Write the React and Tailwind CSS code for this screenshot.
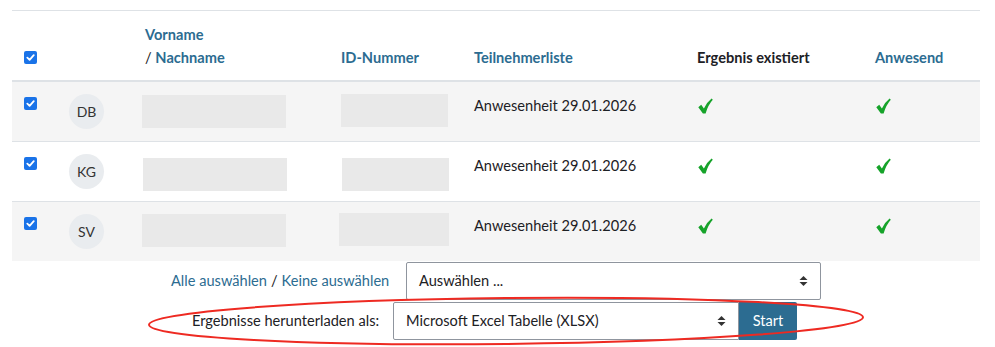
import React from 'react';

const link = 'text-[#2c6c91]';

function Box() {
    return (
        <span className="inline-flex w-[13px] h-[13px] rounded-[2px] bg-[#1a73e8] items-center justify-center">
            <svg width="9" height="9" viewBox="0 0 10 10">
                <path d="M1.5 5.2 L4 7.6 L8.6 2.4" fill="none" stroke="white" strokeWidth="2" strokeLinecap="round" strokeLinejoin="round" />
            </svg>
        </span>
    );
}

function Tick() {
    return (
        <svg width="15" height="16" viewBox="0 0 15 16" className="inline-block">
            <path d="M0.3 9.2 L3.2 6.8 L5.9 10.4 Q8.6 4.6 13.6 0.6 L14.8 1.8 Q10.2 6.8 7.6 15.4 L4.9 15.4 Z" fill="#16a32a" />
        </svg>
    );
}

function Arrows() {
    return (
        <svg width="9" height="12" viewBox="0 0 9 12">
            <path d="M0.5 5 L4.5 1 L8.5 5 Z" fill="#333" />
            <path d="M0.5 7 L4.5 11 L8.5 7 Z" fill="#333" />
        </svg>
    );
}

const rows = [
    { initials: 'DB', bg: 'bg-[#f5f5f5]', name: '-ml-[3px] mt-[1px]', id: 'ml-0 mt-0 w-[107px]' },
    { initials: 'KG', bg: 'bg-white', name: '-ml-[2px] mt-[4px]', id: 'ml-[1px] mt-[4px] w-[107px]' },
    { initials: 'SV', bg: 'bg-[#f5f5f5]', name: '-ml-[3px] mt-0', id: '-ml-[2px] -mt-[1px] w-[110px]' },
];

export default function App() {
    return (
        <div className="relative w-[995px] h-[347px] bg-white text-[14.6px] text-[#1d2125]" style={{ fontFamily: '"Lato", "Noto Sans", sans-serif' }}>
            <div className="pt-[10px] pl-[12px]">
                <table className="w-[968px] border-collapse table-fixed">
                    <colgroup>
                        <col className="w-[45px]" />
                        <col className="w-[76px]" />
                        <col className="w-[196px]" />
                        <col className="w-[133px]" />
                        <col className="w-[223px]" />
                        <col className="w-[178px]" />
                        <col className="w-[117px]" />
                    </colgroup>
                    <thead>
                        <tr className="border-t border-[#dee2e6] border-b-2 border-b-[#dee2e6] font-bold leading-[23px] text-left align-bottom">
                            <th className="px-3 pt-[12px] pb-[11px]"><span className="inline-flex mb-[5px]"><Box /></span></th>
                            <th className="px-3 pt-[12px] pb-[11px]"></th>
                            <th className="px-3 pt-[12px] pb-[11px]">
                                <div className={link}>Vorname</div>
                                <div><span className="font-normal">/ </span><span className={link}>Nachname</span></div>
                            </th>
                            <th className={`px-3 pt-[12px] pb-[11px] ${link}`}>ID-Nummer</th>
                            <th className={`px-3 pt-[12px] pb-[11px] ${link}`}>Teilnehmerliste</th>
                            <th className="px-3 pt-[12px] pb-[11px]">Ergebnis existiert</th>
                            <th className={`px-3 pt-[12px] pb-[11px] ${link}`}>Anwesend</th>
                        </tr>
                    </thead>
                    <tbody>
                        {rows.map((r) => (
                            <tr key={r.initials} className={`${r.bg} border-t border-[#dee2e6] h-[60px] align-top`}>
                                <td className="px-3 pt-[15px]"><span className="flex"><Box /></span></td>
                                <td className="px-3 pt-[12px]">
                                    <div className="w-[35px] h-[35px] rounded-full bg-[#e9ecef] flex items-center justify-center text-[14px] text-[#333]">{r.initials}</div>
                                </td>
                                <td className="px-3 pt-[12px]">
                                    <div className={`w-[144px] h-[33px] bg-[#e9e9e9] ${r.name}`}></div>
                                </td>
                                <td className="px-3 pt-[12px]">
                                    <div className={`h-[33px] bg-[#e9e9e9] ${r.id}`}></div>
                                </td>
                                <td className="px-3 pt-[12px] leading-[23px]">Anwesenheit 29.01.2026</td>
                                <td className="px-3 pt-[16px]"><span className="flex ml-[1px]"><Tick /></span></td>
                                <td className="px-3 pt-[16px]"><span className="flex ml-[1px]"><Tick /></span></td>
                            </tr>
                        ))}
                    </tbody>
                </table>
            </div>

            <div className="flex flex-col pl-[171px]">
                <div className="flex items-center mt-[1px]">
                    <span className="w-[235px]">
                        <span className={link}>Alle auswählen</span>
                        <span className="mx-[4px]">/</span>
                        <span className={link}>Keine auswählen</span>
                    </span>
                    <div className="w-[415px] h-[38px] border border-[#8f959e] rounded-[2px] flex items-center justify-between pl-[12px] pr-[12px]">
                        <span>Auswählen ...</span>
                        <Arrows />
                    </div>
                </div>
                <div className="flex items-center mt-[2px] ml-[21px]">
                    <span className="w-[201px]">Ergebnisse herunterladen als:</span>
                    <div className="w-[346px] h-[38px] border border-[#8f959e] rounded-l-[2px] flex items-center justify-between pl-[12px] pr-[12px]">
                        <span>Microsoft Excel Tabelle (XLSX)</span>
                        <Arrows />
                    </div>
                    <div className="w-[58px] h-[38px] bg-[#2c6c91] text-white flex items-center justify-center rounded-r-[2px]">Start</div>
                </div>
            </div>

            <svg className="absolute left-0 top-0 pointer-events-none" width="995" height="347">
                <ellipse cx="506" cy="321" rx="357" ry="23" fill="none" stroke="#ee2a22" strokeWidth="2" transform="rotate(-0.6 506 321)" />
            </svg>
        </div>
    );
}
